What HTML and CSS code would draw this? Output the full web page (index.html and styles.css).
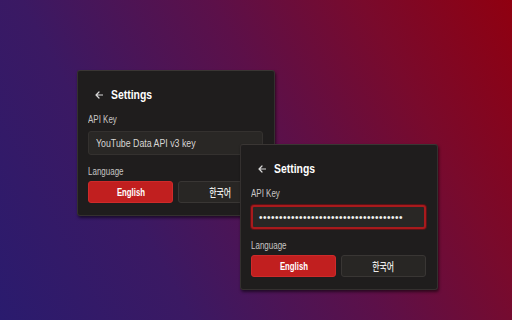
FILE: index.html
```html
<!DOCTYPE html>
<html lang="en">
<head>
<meta charset="utf-8">
<title>Settings</title>
<link rel="stylesheet" href="styles.css">
</head>
<body>
<div class="desk">
  <section class="panel panel-a">
    <header class="title-row">
      <svg class="back" width="8" height="8" viewBox="0 0 8 8" aria-hidden="true"><path d="M7.5 4H1 M4 1L1 4L4 7" fill="none" stroke="#d8d8d8" stroke-width="1.2" stroke-linecap="round" stroke-linejoin="round"/></svg>
      <h1 class="title"><span class="sx">Settings</span></h1>
    </header>
    <label class="label label-api"><span class="sx">API Key</span></label>
    <div class="field"><span class="placeholder sx">YouTube Data API v3 key</span></div>
    <label class="label label-lang"><span class="sx">Language</span></label>
    <div class="langs">
      <button class="btn btn-on"><span class="sx sc">English</span></button>
      <button class="btn btn-off"><span class="sx sc ko">한국어</span></button>
    </div>
  </section>

  <section class="panel panel-b">
    <header class="title-row">
      <svg class="back" width="8" height="8" viewBox="0 0 8 8" aria-hidden="true"><path d="M7.5 4H1 M4 1L1 4L4 7" fill="none" stroke="#d8d8d8" stroke-width="1.2" stroke-linecap="round" stroke-linejoin="round"/></svg>
      <h1 class="title"><span class="sx">Settings</span></h1>
    </header>
    <label class="label label-api"><span class="sx">API Key</span></label>
    <div class="field field-focus"><span class="dots">••••••••••••••••••••••••••••••••••••</span></div>
    <label class="label label-lang"><span class="sx">Language</span></label>
    <div class="langs">
      <button class="btn btn-on"><span class="sx sc">English</span></button>
      <button class="btn btn-off"><span class="sx sc ko">한국어</span></button>
    </div>
  </section>
</div>
</body>
</html>
```

FILE: styles.css
```css
* { box-sizing: border-box; }
html, body { margin: 0; padding: 0; }
body {
  width: 512px;
  height: 320px;
  overflow: hidden;
  font-family: "Liberation Sans", "Noto Sans CJK KR", sans-serif;
}
.desk {
  position: relative;
  width: 512px;
  height: 320px;
  background: linear-gradient(62deg, #2a1b6e 0%, #3b1963 28%, #5c1049 56%, #790a2c 78%, #900010 100%);
}
.sx {
  display: inline-block;
  transform: scaleX(0.78);
  transform-origin: left center;
  white-space: nowrap;
}
.sc { transform-origin: center center; }
.panel {
  position: absolute;
  width: 198px;
  height: 146px;
  padding: 15px 11px 12px 10px;
  background: #1f1d1d;
  border: 1px solid #34302f;
  border-top-color: #3a3634;
  border-radius: 3px;
  box-shadow: 1px 2px 3px rgba(0,0,0,.55);
  display: flex;
  flex-direction: column;
}
.panel-a { left: 77px; top: 70px; }
.panel-b { left: 240px; top: 144px; }
.title-row {
  display: flex;
  align-items: center;
  height: 18px;
  padding-left: 7px;
  gap: 8px;
}
.back { display: block; }
.title {
  margin: 0;
  font-size: 13px;
  font-weight: 700;
  color: #ffffff;
  line-height: 18px;
}
.title .sx { transform: scaleX(0.8); }
.label {
  display: block;
  font-size: 10.5px;
  line-height: 14px;
  color: #c8c6c4;
}
.label .sx { transform: scaleX(0.76); }
.label-api { margin-top: 8px; }
.label-lang { margin-top: 9px; }
.field {
  margin-top: 5px;
  height: 25px;
  border: 1px solid #34312f;
  border-radius: 3px;
  background: #292725;
  display: flex;
  align-items: center;
  padding-left: 7px;
}
.placeholder {
  font-size: 11px;
  color: #d8d6d4;
}
.field .placeholder { transform: scaleX(0.8); }
.field-focus {
  border: 2px solid #a81a1c;
  box-shadow: 0 0 0 1px #5a1216;
  padding-left: 6px;
}
.dots {
  font-family: "Liberation Sans", sans-serif;
  font-size: 10px;
  letter-spacing: 0.5px;
  color: #f2f2f2;
}
.langs {
  margin-top: 3px;
  display: grid;
  grid-template-columns: 1fr 1fr;
  gap: 5px;
}
.btn {
  height: 22px;
  border-radius: 3px;
  font-family: "Liberation Sans", "Noto Sans CJK KR", sans-serif;
  font-size: 10.5px;
  font-weight: 700;
  color: #ffffff;
  padding: 0;
  display: flex;
  align-items: center;
  justify-content: center;
}
.btn .sx { transform: scaleX(0.74); }
.btn .ko { font-size: 11px; transform: scaleX(0.72); }
.btn-on {
  background: #c11f1f;
  border: 1px solid #cf2a2a;
}
.btn-off {
  background: #282624;
  border: 1px solid #393634;
  color: #ecebea;
  font-weight: 500;
}
```
